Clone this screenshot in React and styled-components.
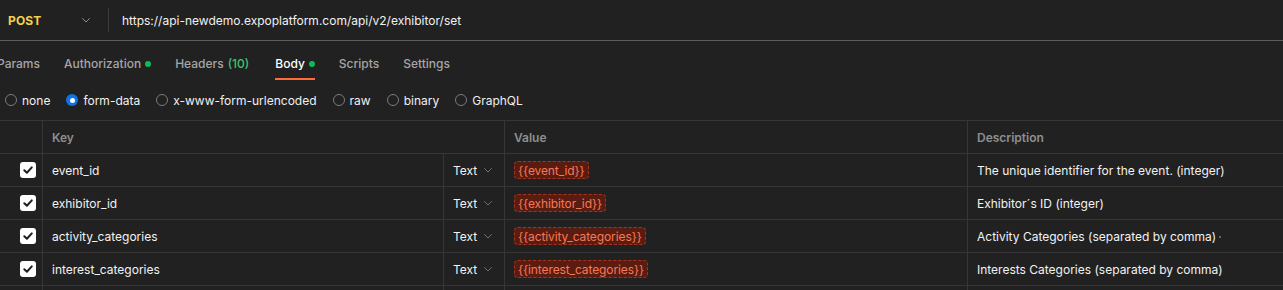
import React from "react";
import styled, { createGlobalStyle } from "styled-components";

const GlobalStyle = createGlobalStyle`
  html, body { margin: 0; padding: 0; background: #212121; }
  body { font-family: Inter, "Noto Sans", sans-serif; font-size: 12px; color: #f0f0f0; overflow: hidden; }
  * { box-sizing: border-box; }
`;

const Page = styled.div`
  width: 1283px;
  height: 290px;
  background: #212121;
  overflow: hidden;
`;

const UrlBar = styled.div`
  display: flex;
  align-items: center;
  height: 41px;
  border-bottom: 1px solid #5e5e5e;
  padding-left: 8px;
`;

const Method = styled.span`
  font-weight: 700;
  font-size: 12px;
  color: #f4d04b;
  width: 73px;
  letter-spacing: 0.1px;
`;

const Chevron = styled.svg`
  display: block;
  flex: none;
  color: ${(p) => p.$color || "#8c8c8c"};
`;

const Divider = styled.div`
  width: 1px;
  height: 24px;
  background: #3d3d3d;
  margin: 0 13px 0 17px;
`;

const Url = styled.span`
  font-size: 12px;
  color: #f2f2f2;
`;

const Tabs = styled.div`
  display: flex;
  gap: 24px;
  margin-left: -3px;
  height: 39px;
`;

const Tab = styled.div`
  display: flex;
  align-items: center;
  height: 39px;
  padding-top: 8px;
  border-bottom: 2px solid ${(p) => (p.$active ? "#ff6c37" : "transparent")};
  color: ${(p) => (p.$active ? "#ffffff" : "#a6a6a6")};
  font-size: 12px;
  font-weight: 500;
  margin-left: ${(p) => (p.$active ? "2px" : "0")};
`;

const Dot = styled.span`
  width: 6px;
  height: 6px;
  border-radius: 50%;
  background: #0cbb52;
  margin-left: 4px;
`;

const Count = styled.span`
  color: #3fc46f;
  margin-left: 4px;
`;

const BodyTypes = styled.div`
  display: flex;
  align-items: center;
  gap: 16px;
  height: 40px;
  padding-left: 5px;
`;

const RadioItem = styled.label`
  display: flex;
  align-items: center;
  gap: 5px;
  color: #f0f0f0;
  font-size: 12px;
`;

const Radio = styled.span`
  width: 12px;
  height: 12px;
  border-radius: 50%;
  display: flex;
  align-items: center;
  justify-content: center;
  border: ${(p) => (p.$checked ? "none" : "1px solid #7c7c7c")};
  background: ${(p) => (p.$checked ? "#0d74e7" : "transparent")};
  &::after {
    content: "";
    display: ${(p) => (p.$checked ? "block" : "none")};
    width: 5px;
    height: 5px;
    border-radius: 50%;
    background: #ffffff;
  }
`;

const Table = styled.div`
  display: grid;
  grid-template-columns: 42px 401px 61px 463px 1fr;
  border-top: 1px solid #363636;
`;

const Cell = styled.div`
  display: flex;
  align-items: center;
  height: 33px;
  border-bottom: 1px solid #363636;
  border-left: ${(p) => (p.$first ? "none" : "1px solid #363636")};
  padding: 0 9px;
  grid-column: ${(p) => p.$span || "auto"};
  color: ${(p) => (p.$header ? "#8f8f8f" : "#f2f2f2")};
  font-weight: ${(p) => (p.$header ? 600 : 400)};
  font-size: 12px;
  white-space: nowrap;
  overflow: hidden;
`;

const CheckCell = styled(Cell)`
  justify-content: flex-end;
  padding: 0 6px 0 0;
`;

const TypeCell = styled(Cell)`
  justify-content: space-between;
  padding-right: 11px;
`;

const Checkbox = styled.span`
  width: 16px;
  height: 16px;
  border-radius: 3px;
  background: #ffffff;
  display: flex;
  align-items: center;
  justify-content: center;
`;

const Pill = styled.span`
  display: inline-flex;
  align-items: center;
  height: 18px;
  padding: 0 3px;
  border-radius: 4px;
  background: #5a1c10;
  border: 1px dashed #9e3622;
  color: #f5795a;
  font-size: 12px;
  letter-spacing: -0.1px;
`;

const Handle = styled.span`
  width: 2px;
  height: 2px;
  border-radius: 50%;
  background: #7a7a7a;
  margin-left: 3px;
  margin-top: 1px;
`;

const ChevronIcon = ({ size = 9, color }) => (
  <Chevron $color={color} width={size} height={size} viewBox="0 0 10 10" fill="none">
    <path d="M1.5 3.5 L5 7 L8.5 3.5" stroke="currentColor" strokeWidth="1" strokeLinecap="round" strokeLinejoin="round" />
  </Chevron>
);

const CheckIcon = () => (
  <svg width="12" height="12" viewBox="0 0 12 12" fill="none">
    <path d="M2.3 6.2 L4.9 8.7 L9.8 3.4" stroke="#1e1e1e" strokeWidth="2" strokeLinecap="round" strokeLinejoin="round" />
  </svg>
);

const rows = [
  { key: "event_id", value: "{{event_id}}", desc: "The unique identifier for the event. (integer)" },
  { key: "exhibitor_id", value: "{{exhibitor_id}}", desc: "Exhibitor´s ID (integer)" },
  { key: "activity_categories", value: "{{activity_categories}}", desc: "Activity Categories (separated by comma)", handle: true },
  { key: "interest_categories", value: "{{interest_categories}}", desc: "Interests Categories (separated by comma)" },
];

const bodyTypes = ["none", "form-data", "x-www-form-urlencoded", "raw", "binary", "GraphQL"];

export default function App() {
  return (
    <Page>
      <GlobalStyle />
      <UrlBar>
        <Method>POST</Method>
        <ChevronIcon size={10} color="#8c8c8c" />
        <Divider />
        <Url>https://api-newdemo.expoplatform.com/api/v2/exhibitor/set</Url>
      </UrlBar>
      <Tabs>
        <Tab>Params</Tab>
        <Tab>Authorization<Dot /></Tab>
        <Tab>Headers<Count>(10)</Count></Tab>
        <Tab $active>Body<Dot /></Tab>
        <Tab>Scripts</Tab>
        <Tab>Settings</Tab>
      </Tabs>
      <BodyTypes>
        {bodyTypes.map((t) => (
          <RadioItem key={t}>
            <Radio $checked={t === "form-data"} />
            {t}
          </RadioItem>
        ))}
      </BodyTypes>
      <Table>
        <Cell $header $first />
        <Cell $header $span="span 2">Key</Cell>
        <Cell $header>Value</Cell>
        <Cell $header>Description</Cell>
        {rows.map((r) => (
          <React.Fragment key={r.key}>
            <CheckCell $first>
              <Checkbox><CheckIcon /></Checkbox>
            </CheckCell>
            <Cell>{r.key}</Cell>
            <TypeCell>
              Text
              <ChevronIcon size={10} color="#6f6f6f" />
            </TypeCell>
            <Cell><Pill>{r.value}</Pill></Cell>
            <Cell>
              {r.desc}
              {r.handle && <Handle />}
            </Cell>
          </React.Fragment>
        ))}
        <CheckCell $first />
        <Cell />
        <TypeCell />
        <Cell />
        <Cell />
      </Table>
    </Page>
  );
}
